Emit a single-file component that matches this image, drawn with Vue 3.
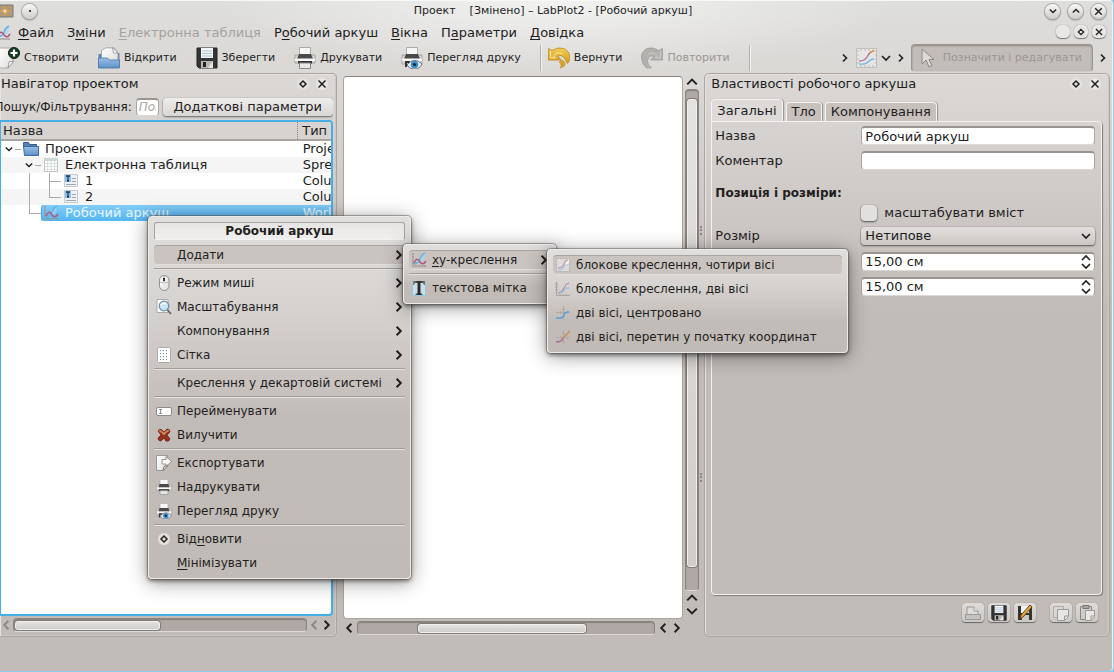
<script setup>
import { ref } from 'vue'

const menus = [
  { pre: '', key: 'Ф', post: 'айл' },
  { pre: 'З', key: 'м', post: 'іни' },
  { pre: '', key: 'Е', post: 'лектронна таблиця', disabled: true },
  { pre: 'Р', key: 'о', post: 'бочий аркуш' },
  { pre: '', key: 'В', post: 'ікна' },
  { pre: 'П', key: 'а', post: 'раметри' },
  { pre: '', key: 'Д', post: 'овідка' }
]

const tools = [
  { icon: 'new', label: 'Створити' },
  { icon: 'open', label: 'Відкрити' },
  { icon: 'save', label: 'Зберегти' },
  { icon: 'print', label: 'Друкувати' },
  { icon: 'preview', label: 'Перегляд друку' }
]

const rows = [
  { depth: 0, icon: 'folder', name: 'Проект', type: 'Project', open: true },
  { depth: 1, icon: 'sheet', name: 'Електронна таблиця', type: 'Spreadsheet', open: true },
  { depth: 2, icon: 'column', name: '1', type: 'Column' },
  { depth: 2, icon: 'column', name: '2', type: 'Column', last: true },
  { depth: 1, icon: 'worksheet', name: 'Робочий аркуш', type: 'Worksheet', selected: true, last: true }
]

const contextMenu = [
  { label: 'Додати', arrow: true, active: true },
  { sep: true },
  { icon: 'mouse', label: 'Режим миші', arrow: true },
  { icon: 'zoom', label: 'Масштабування', arrow: true },
  { label: 'Компонування', arrow: true },
  { icon: 'grid', label: 'Сітка', arrow: true },
  { sep: true },
  { label: 'Креслення у декартовій системі', arrow: true },
  { sep: true },
  { icon: 'rename', label: 'Перейменувати' },
  { icon: 'delete', label: 'Вилучити' },
  { sep: true },
  { icon: 'export', label: 'Експортувати' },
  { icon: 'print', label: 'Надрукувати' },
  { icon: 'preview', label: 'Перегляд друку' },
  { sep: true },
  { icon: 'diamond', pre: 'Від', key: 'н', label: 'овити' },
  { key: 'М', label: 'інімізувати' }
]

const addMenu = [
  { icon: 'worksheet', key: 'x', label: 'y-креслення', arrow: true, active: true },
  { sep: true },
  { icon: 'text', label: 'текстова мітка' }
]

const plotMenu = [
  { icon: 'plot4', label: 'блокове креслення, чотири вісі', active: true },
  { icon: 'plot2', label: 'блокове креслення, дві вісі' },
  { icon: 'axisc', label: 'дві вісі, центровано' },
  { icon: 'axiso', label: 'дві вісі, перетин у початку координат' }
]

const popups = [
  { id: 'ctx', title: 'Робочий аркуш', items: contextMenu },
  { id: 'add', items: addMenu },
  { id: 'plot', items: plotMenu }
]

const title = ref('Робочий аркуш')
const comment = ref('')
const filter = ref('')
const scale = ref(false)
const size = ref('Нетипове')
const sizes = ref([
  { label: 'Ширина', value: '15,00 см' },
  { label: 'Висота', value: '15,00 см' }
])
const tab = ref('Загальні')
const tabs = ['Загальні', 'Тло', 'Компонування']
</script>

<template>
  <svg class="defs" aria-hidden="true">
    <defs>
      <linearGradient id="gBlue" x1="0" y1="0" x2="0" y2="1"><stop offset="0" stop-color="#9bbfe6" /><stop offset="1" stop-color="#5f90c8" /></linearGradient>
      <linearGradient id="gPaper" x1="0" y1="0" x2="1" y2="1"><stop offset="0" stop-color="#ffffff" /><stop offset="1" stop-color="#dddddd" /></linearGradient>
      <linearGradient id="gUndo" x1="0" y1="0" x2="0" y2="1"><stop offset="0" stop-color="#f0cf5a" /><stop offset="1" stop-color="#d79a1c" /></linearGradient>
      <linearGradient id="gText" x1="0" y1="0" x2="1" y2="0"><stop offset="0" stop-color="#888" /><stop offset=".5" stop-color="#222" /><stop offset="1" stop-color="#777" /></linearGradient>

      <symbol id="i-new" viewBox="0 0 22 22">
        <path d="M1 1h14v14l-5 6H1z" fill="url(#gPaper)" stroke="#aaa" />
        <path d="M10 21l1-6 5-1z" fill="#fff" stroke="#999" />
        <circle cx="16" cy="6" r="5.500" fill="#173c20" stroke="#0c2010" />
        <path d="M16 2.500v7M12.500 6h7" stroke="#fff" stroke-width="2.200" />
      </symbol>
      <symbol id="i-open" viewBox="0 0 22 22">
        <path d="M.5 7h3V3h4l2 3h12v14H.5z" fill="#5c86b8" />
        <path d="M3.500 15V3.500L8 .8h8l4 5.200v9z" fill="url(#gPaper)" stroke="#999" stroke-width=".8" />
        <path d="M14.500 1l1 5h4.500z" fill="#fff" stroke="#888" stroke-width=".7" />
        <path d="M.5 11h9l2 2h10v8H.5z" fill="url(#gBlue)" stroke="#4472a6" stroke-width=".8" />
      </symbol>
      <symbol id="i-save" viewBox="0 0 22 22">
        <path d="M1 1h20v20H3l-2-2z" fill="#343434" stroke="#222" />
        <path d="M5 1h12v10H5z" fill="#f3f6f8" />
        <path d="M6 4h10M6 6.500h10M6 9h10" stroke="#a7c4d4" />
        <path d="M5 14h12v7H5z" fill="#b9b9b4" />
        <path d="M7 15h3v5H7z" fill="#222" />
        <path d="M12 21l5-7v7z" fill="#e6e6e0" />
      </symbol>
      <symbol id="i-print" viewBox="0 0 22 22">
        <path d="M1 8h20v8H1z" fill="#d5d5d5" stroke="#999" stroke-width=".8" />
        <path d="M5.500.5h11v9h-11z" fill="#f7f7f7" stroke="#aaa" />
        <path d="M5 7h12l2 5H3z" fill="#4a4a4a" />
        <path d="M1 11.500h20v2.500H1z" fill="#f8f8f8" />
        <path d="M4 14h14v2.500H4z" fill="#333" />
        <path d="M5.500 16h11v5.500h-11z" fill="#e8e8e8" stroke="#888" />
      </symbol>
      <symbol id="i-preview" viewBox="0 0 22 22">
        <path d="M1 8h20v9H1z" fill="#d5d5d5" stroke="#999" stroke-width=".8" />
        <path d="M5.500.5h11v9h-11z" fill="#f7f7f7" stroke="#aaa" />
        <path d="M5 7h12l2 5H3z" fill="#4a4a4a" />
        <path d="M1 11.500h20v2.500H1z" fill="#f8f8f8" />
        <path d="M4 14h5v2H6v4H4z" fill="#333" />
        <path d="M6 18q7-9 15-1-2 5-8 5-5 0-7-4z" fill="#e9f1f7" stroke="#667" stroke-width=".9" />
        <circle cx="13.500" cy="17.500" r="3.800" fill="#3f8dc6" />
        <circle cx="13.500" cy="17.500" r="1.600" fill="#12283c" />
      </symbol>
      <symbol id="i-undo" viewBox="0 0 22 22">
        <path d="M.5 1.500L4 3.500Q10-.5 16 1.500q6 3 6 9.500-.5 3-2.500 5.500L18 14q-1-4-5-5.500-2.500-.5-3 .5l3 4H.5z" fill="url(#gUndo)" stroke="#bd8a1b" stroke-width=".8" />
        <path d="M11 15l3-2q4 2 3 5-1 2-5 3 1.500-2 1-4z" fill="#dca52b" stroke="#bd8a1b" stroke-width=".6" />
        <path d="M2.500 4v7h5l-2-2q4-5 9-2" fill="none" stroke="#f9e9a4" />
      </symbol>
      <symbol id="i-redo" viewBox="0 0 22 22">
        <path d="M21.500 1.500L18 3.500Q12-.5 6 1.500 0 4.500.5 11q.5 6 5 10 3-.5 5 0-4-3-4-7 .5-4.500 4-5 1.500 0 2 1l-3 3h12z" fill="#b3b1ae" stroke="#9e9c99" stroke-width=".8" />
        <path d="M19.500 4v7h-5l2-2q-4-5-9-2" fill="none" stroke="#cfcdca" />
      </symbol>
      <symbol id="i-folder" viewBox="0 0 16 16">
        <path d="M.5 3.500V1.500h5l1 2h7v3H.5z" fill="#5380b8" stroke="#365d90" />
        <path d="M.5 5.500h15v9h-14z" fill="url(#gBlue)" stroke="#3e6ba0" />
      </symbol>
      <symbol id="i-sheet" viewBox="0 0 16 16">
        <path d="M1.500 1.500h13v13h-13z" fill="#fcfcfc" stroke="#c4c4c4" />
        <path d="M1 1h14v3H1z" fill="#c9d8d3" />
        <path d="M2 6.500h12M2 9.500h12M2 12.500h12M4.500 4v10M8 4v10M11.500 4v10" stroke="#d5d9da" stroke-width=".8" />
      </symbol>
      <symbol id="i-column" viewBox="0 0 16 16">
        <path d="M1.500 1.500h13v12h-13z" fill="#eef1f4" stroke="#c4cacf" />
        <path d="M2 2h6v7H2z" fill="#8fc0e6" />
        <path d="M3 3h4M5 3v5M4 8h2" stroke="#123a66" stroke-width="1.300" />
        <path d="M9 5.500h4M9 8.500h4M3 11.500h10" stroke="#9ba8b3" />
      </symbol>
      <symbol id="i-worksheet" viewBox="0 0 16 16">
        <path d="M2 1v13M1 14h14M1 2h2M1 5h2M1 8h2M1 11h2M5 13v2M8 13v2M11 13v2M14 13v2" stroke="#9b938f" stroke-width=".8" />
        <path d="M8 10q0-6 6-9l-1 8z" fill="#a9d6f2" opacity=".6" />
        <path d="M3 12q5-1 6-5t5-6" fill="none" stroke="#62b5e7" stroke-width="1.400" />
        <path d="M3 11q3-7 6-1 3 4 6-1" fill="none" stroke="#b2567a" stroke-width="1.500" />
      </symbol>
      <symbol id="i-plot4" viewBox="0 0 16 16">
        <path d="M1.500 1.500h13v13h-13z" fill="#dedbd9" stroke="#b5b0ad" stroke-dasharray="2 1" />
        <path d="M3 11q5 0 6-4t4-4" fill="none" stroke="#c59abb" stroke-width="1.200" />
        <path d="M3 13q5 0 6-3t4-2" fill="none" stroke="#a5cce4" stroke-width="1.200" />
        <path d="M10 8l4-6v4z" fill="#f4f3f2" />
      </symbol>
      <symbol id="i-plot2" viewBox="0 0 16 16">
        <path d="M1.500 1v13.500H15M0 3h3M0 6h3M0 9h3M5 13v2M8 13v2M11 13v2" fill="none" stroke="#aaa5a2" />
        <path d="M3 12q4 0 6-5t5-5" fill="none" stroke="#b27a9d" />
        <path d="M4 12q4 0 5-3t5-2" fill="none" stroke="#70bee9" />
      </symbol>
      <symbol id="i-axisc" viewBox="0 0 16 16">
        <path d="M8.500 1v14M1 7.500h14M7 4.500h3M7 11.500h3M5.500 6v3M12.500 6v3" stroke="#b0aba8" />
        <path d="M1 13q7 1 8-3t5-3" fill="none" stroke="#4c9fdd" stroke-width="1.300" />
      </symbol>
      <symbol id="i-axiso" viewBox="0 0 16 16">
        <path d="M8.500 1v14M1 8.500h14M7 4.500h3M7 12.500h3M5.500 7v3M12.500 7v3" stroke="#b0aba8" />
        <path d="M1 13q6 0 7-4" fill="none" stroke="#b36797" stroke-width="1.300" />
        <path d="M8 9l7-7" stroke="#d08746" stroke-width="1.300" />
      </symbol>
      <symbol id="i-mouse" viewBox="0 0 16 16">
        <rect x="3.500" y=".5" width="9.500" height="15" rx="4.800" fill="url(#gPaper)" stroke="#8d8d8d" />
        <path d="M8 1v6" stroke="#999" /><path d="M8 3v3" stroke="#333" stroke-width="2" />
        <path d="M4 7q4 2 8.500 0" fill="none" stroke="#aaa" stroke-width=".8" />
      </symbol>
      <symbol id="i-zoom" viewBox="0 0 16 16">
        <path d="M1 .5h11v13H1z" fill="#fff" stroke="#aaa" />
        <circle cx="8" cy="7" r="4.800" fill="#c9e3f0" stroke="#6a8fa4" stroke-width="1.200" />
        <path d="M11.500 11l3.500 4" stroke="#666" stroke-width="1.800" />
        <path d="M5 6q2-3 5-1" fill="none" stroke="#fff" stroke-width="1.300" />
      </symbol>
      <symbol id="i-grid" viewBox="0 0 16 16">
        <rect x="1.500" y=".5" width="13" height="15" rx="1" fill="#fff" stroke="#aaa" />
        <path d="M4 3.500h9M4 6.500h9M4 9.500h9M4 12.500h9" stroke="#5b7fb0" stroke-dasharray="1 2" />
      </symbol>
      <symbol id="i-rename" viewBox="0 0 16 16">
        <rect x=".5" y="4.500" width="15" height="8" rx="1.500" fill="#fff" stroke="#8f8b88" />
        <path d="M3 6.500h3M4.500 6.500v4M3 10.500h3" stroke="#777" stroke-width=".8" />
      </symbol>
      <symbol id="i-delete" viewBox="0 0 16 16">
        <path d="M2 4q1-3 4-1l2 2 3-3q3 0 3 3l-3 3 3 4q-1 3-4 2l-2-3-3 3q-3 0-3-3l3-3z" fill="#94301f" stroke="#712015" stroke-width=".8" />
        <path d="M3 4q1-1 5 3 3-4 5-3" fill="none" stroke="#d08a58" stroke-width="1.800" />
      </symbol>
      <symbol id="i-export" viewBox="0 0 16 16">
        <path d="M.5.5h11v11l-4 4h-7z" fill="url(#gPaper)" stroke="#999" />
        <path d="M6 4.500h4V1.500l5.500 5-5.500 5V9H6z" fill="#f8f8f8" stroke="#888" stroke-width=".9" />
        <path d="M7 15.500l1-4 4-1z" fill="#fff" stroke="#777" />
      </symbol>
      <symbol id="i-diamond" viewBox="0 0 16 16">
        <circle cx="8" cy="8" r="6" fill="#e4e1df" />
        <path d="M8 5l3 3-3 3-3-3z" fill="none" stroke="#222" stroke-width="1.500" />
      </symbol>
      <symbol id="i-close" viewBox="0 0 16 16">
        <circle cx="8" cy="8" r="6" fill="#e8e6e4" />
        <path d="M4.500 4.500l7 7M11.500 4.500l-7 7" stroke="#222" stroke-width="1.500" />
      </symbol>
      <symbol id="i-text" viewBox="0 0 16 16">
        <path d="M1.500 1v14.500h13V1" fill="#cfdde6" stroke="#8fc8ea" />
        <path d="M2 1h12v4h-1l-1-2H9.500v10l2 1v1h-7v-1l2-1V3H4L3 5H2z" fill="url(#gText)" />
      </symbol>
      <symbol id="i-plot" viewBox="0 0 22 22">
        <rect x="1.500" y="1.500" width="20" height="19" fill="#e6e5e3" stroke="#c2bfbc" />
        <path d="M2 4h2M2 8h2M2 12h2M2 16h2M20 4h2M20 8h2M20 12h2M20 16h2M6 2v2M10 2v2M14 2v2M6 18v2M10 18v2M14 18v2M18 18v2" stroke="#bbb" />
        <path d="M4 14q6 0 8-4 3-6 7-6" fill="none" stroke="#b0709c" stroke-width="1.300" />
        <path d="M4 17q7 1 10-3 2-2 5-2" fill="none" stroke="#72b9e6" stroke-width="1.300" />
        <path d="M15 6l4-3" stroke="#e39b45" stroke-width="1.300" />
      </symbol>
      <symbol id="i-pointer" viewBox="0 0 22 22">
        <path d="M6 2v15l4-4 3 7 3-1.500-3-6h5z" fill="#dcd8d5" stroke="#8e8986" />
      </symbol>
      <symbol id="i-right" viewBox="0 0 10 10"><path d="M3 1.500L6.500 5 3 8.500" fill="none" stroke="currentColor" stroke-width="1.600" /></symbol>
      <symbol id="i-left" viewBox="0 0 10 10"><path d="M7 1.500L3.500 5 7 8.500" fill="none" stroke="currentColor" stroke-width="1.600" /></symbol>
      <symbol id="i-down" viewBox="0 0 10 10"><path d="M1 3l4 4 4-4" fill="none" stroke="currentColor" stroke-width="1.700" /></symbol>
      <symbol id="i-up" viewBox="0 0 10 10"><path d="M1 7l4-4 4 4" fill="none" stroke="currentColor" stroke-width="1.700" /></symbol>
      <symbol id="i-gload" viewBox="0 0 16 16">
        <path d="M2 13V2h7l4 4v7z" fill="#ddd" stroke="#999" /><path d="M9 2v4h4" fill="#eee" stroke="#999" />
        <path d="M.5 9.500h15v5H.5z" fill="#c4c2c0" stroke="#999" />
      </symbol>
      <symbol id="i-saveas" viewBox="0 0 16 16">
        <path d="M1 1h14v14H1z" fill="#343434" /><path d="M4 1h8v7H4z" fill="#eef4f8" /><path d="M5 10h7v5H5z" fill="#c9c9c4" />
        <path d="M3 14l1-4L13 0l2 2-9 10z" fill="#e9a93a" stroke="#5a3510" stroke-width=".9" />
      </symbol>
      <symbol id="i-copy" viewBox="0 0 16 16">
        <path d="M.5 1.500h10v11H.5z" fill="#d9d7d5" stroke="#aaa" />
        <path d="M4.500 4.500h11v7l-4 4h-7z" fill="#e6e5e3" stroke="#999" /><path d="M11.500 15v-4h4" fill="none" stroke="#999" />
      </symbol>
      <symbol id="i-paste" viewBox="0 0 16 16">
        <path d="M1.500 1.500h11v13h-11z" fill="#cfcdcb" stroke="#888" /><path d="M4 .5h6v3H4z" fill="#aaa" stroke="#777" />
        <path d="M6.500 5.500h9v6l-3 4h-6z" fill="#e8e7e5" stroke="#999" /><path d="M12 15v-4h3" fill="none" stroke="#999" />
      </symbol>
      <symbol id="i-app" viewBox="0 0 16 16">
        <path d="M-1 2h16v12H-1z" fill="#9f998e" stroke="#7e7970" /><path d="M0 4h13v8H0z" fill="none" stroke="#c79c5c" />
        <path d="M7 3l2 3 4 2-4 2-2 3-2-3-4-2 4-2z" fill="#d9a050" /><circle cx="7" cy="8" r="1.500" fill="#efe3cc" />
      </symbol>
    </defs>
  </svg>

  <div class="window">
    <header class="titlebar">
      <svg class="s16"><use href="#i-app" /></svg>
      <button class="round" aria-label="Закріпити"><span class="dot"></span></button>
      <h1>Проект &nbsp;&nbsp; [Змінено] – LabPlot2 - [Робочий аркуш]</h1>
      <button class="round" aria-label="Згорнути"><svg class="s8"><use href="#i-down" /></svg></button>
      <button class="round" aria-label="Розгорнути"><svg class="s8"><use href="#i-up" /></svg></button>
      <button class="round" aria-label="Закрити"><svg class="s15"><use href="#i-close" /></svg></button>
    </header>

    <nav class="menubar">
      <svg class="s16 menuicon"><use href="#i-worksheet" /></svg>
      <button v-for="m in menus" :key="m.post" :disabled="m.disabled">{{ m.pre }}<u>{{ m.key }}</u>{{ m.post }}</button>
      <span class="grow"></span>
      <div class="pills">
        <button aria-label="Згорнути аркуш"></button>
        <button aria-label="Відновити аркуш"><svg class="s14"><use href="#i-diamond" /></svg></button>
        <button aria-label="Закрити аркуш"><svg class="s14"><use href="#i-close" /></svg></button>
      </div>
    </nav>

    <div class="toolbar">
      <button v-for="t in tools" :key="t.icon" class="tool"><svg class="s22"><use :href="'#i-' + t.icon" /></svg>{{ t.label }}</button>
      <span class="vsep"></span>
      <button class="tool undo"><svg class="s22"><use href="#i-undo" /></svg>Вернути</button>
      <button class="tool" disabled><svg class="s22"><use href="#i-redo" /></svg>Повторити</button>
      <span class="vsep"></span>
      <span class="grow"></span>
      <div class="extras">
        <button aria-label="Більше"><svg class="s10"><use href="#i-right" /></svg></button>
        <button class="plotbtn" aria-label="Креслення"><svg class="s22"><use href="#i-plot" /></svg><svg class="s10"><use href="#i-down" /></svg></button>
        <button aria-label="Більше"><svg class="s10"><use href="#i-right" /></svg></button>
        <button class="mode" disabled><svg class="s22"><use href="#i-pointer" /></svg>Позначити і редагувати</button>
        <button aria-label="Більше"><svg class="s10"><use href="#i-right" /></svg></button>
      </div>
    </div>

    <main class="main">
      <section class="dock explorer">
        <div class="docktitle">
          <h2>Навігатор проектом</h2>
          <button aria-label="Від’єднати"><svg class="s16"><use href="#i-diamond" /></svg></button>
          <button aria-label="Закрити"><svg class="s16"><use href="#i-close" /></svg></button>
        </div>
        <div class="search">
          <label for="filter">Пошук/Фільтрування:</label>
          <input id="filter" v-model="filter" placeholder="Пошук" />
          <button class="push">Додаткові параметри</button>
        </div>
        <div class="tree">
          <table>
            <thead>
              <tr><th class="c1">Назва</th><th>Тип</th></tr>
            </thead>
            <tbody>
              <tr v-for="r in rows" :key="r.name">
                <td>
                  <div class="node">
                    <span v-for="n in r.depth + 1" :key="n" class="branch" :class="{ elbow: n === r.depth + 1 && r.depth && !r.open, end: r.last && n === r.depth + 1, pass: n === 2 && r.depth === 2, top: n === r.depth + 1 && r.open }">
                      <svg v-if="r.open && n === r.depth + 1" class="s8"><use href="#i-down" /></svg>
                    </span>
                    <span class="cell" :class="{ sel: r.selected }"><svg class="s16"><use :href="'#i-' + r.icon" /></svg>{{ r.name }}</span>
                  </div>
                </td>
                <td :class="{ sel: r.selected }">{{ r.type }}</td>
              </tr>
            </tbody>
          </table>
        </div>
        <div class="scroll">
          <svg class="s12 off"><use href="#i-left" /></svg>
          <div class="track"><div class="thumb t1"></div></div>
          <svg class="s12 off"><use href="#i-left" /></svg>
          <svg class="s12"><use href="#i-right" /></svg>
        </div>
      </section>

      <section class="center">
        <div class="canvas"></div>
        <div class="scroll vert">
          <svg class="s12"><use href="#i-up" /></svg>
          <div class="track"><div class="thumb t3"></div></div>
          <svg class="s12"><use href="#i-up" /></svg>
          <svg class="s12"><use href="#i-down" /></svg>
        </div>
        <div class="scroll">
          <svg class="s12"><use href="#i-left" /></svg>
          <div class="track"><div class="thumb t2"></div></div>
          <svg class="s12"><use href="#i-left" /></svg>
          <svg class="s12"><use href="#i-right" /></svg>
        </div>
      </section>

      <section class="dock props">
        <div class="docktitle">
          <h2>Властивості робочого аркуша</h2>
          <button aria-label="Від’єднати"><svg class="s16"><use href="#i-diamond" /></svg></button>
          <button aria-label="Закрити"><svg class="s16"><use href="#i-close" /></svg></button>
        </div>
        <div class="tabs" role="tablist">
          <button v-for="t in tabs" :key="t" role="tab" :aria-selected="t === tab" :class="{ on: t === tab }" @click="tab = t">{{ t }}</button>
        </div>
        <form class="pane" @submit.prevent>
          <label for="name">Назва</label>
          <input id="name" v-model="title" />
          <label for="comment">Коментар</label>
          <input id="comment" v-model="comment" />
          <h3>Позиція і розміри:</h3>
          <div class="check"><input id="scale" v-model="scale" type="checkbox" /><label for="scale">масштабувати вміст</label></div>
          <label for="size">Розмір</label>
          <div class="combo"><select id="size" v-model="size"><option>Нетипове</option></select><svg class="s10"><use href="#i-down" /></svg></div>
          <div v-for="s in sizes" :key="s.label" class="spin"><input v-model="s.value" :aria-label="s.label" /><svg viewBox="0 0 10 16"><path d="M1 6l4-4 4 4M1 10l4 4 4-4" fill="none" stroke="#222" stroke-width="1.700" /></svg></div>
        </form>
        <div class="actions">
          <button aria-label="Завантажити"><svg class="s16"><use href="#i-gload" /></svg></button>
          <button aria-label="Зберегти"><svg class="s16"><use href="#i-save" /></svg></button>
          <button aria-label="Зберегти типовим"><svg class="s16"><use href="#i-saveas" /></svg></button>
          <button class="second" aria-label="Копіювати"><svg class="s16"><use href="#i-copy" /></svg></button>
          <button aria-label="Вставити"><svg class="s16"><use href="#i-paste" /></svg></button>
        </div>
        <span class="grip"></span>
        <span class="grip low"></span>
      </section>
    </main>

    <footer class="status"></footer>

    <div v-for="p in popups" :key="p.id" class="popup" :class="p.id" role="menu">
      <div v-if="p.title" class="ptitle">{{ p.title }}</div>
      <template v-for="(i, k) in p.items" :key="k">
        <hr v-if="i.sep" />
        <button v-else class="item" :class="{ active: i.active }" role="menuitem">
          <svg class="s16"><use v-if="i.icon" :href="'#i-' + i.icon" /></svg>
          <span>{{ i.pre }}<u v-if="i.key">{{ i.key }}</u>{{ i.label }}</span>
          <svg v-if="i.arrow" class="s12 arrow"><use href="#i-right" /></svg>
        </button>
      </template>
    </div>
  </div>
</template>

<style>
body { margin: 0; background: #8ecdf0; }
</style>

<style scoped>
* { box-sizing: border-box; }
.defs { position: absolute; width: 0; height: 0; }
.window {
  position: relative;
  display: flex;
  flex-direction: column;
  min-height: calc(100vh - 1px);
  margin-right: 1px;
  overflow: hidden;
  color: #221e1e;
  font: 13px/16px "DejaVu Sans", sans-serif;
  border-top: 1px solid #f8f8f8;
  border-right: 1px solid #f3f3f3;
  border-radius: 0 4px 4px 0;
  background:
    radial-gradient(ellipse 340px 74px at 50% 0, rgba(255, 255, 255, .6), rgba(255, 255, 255, 0)),
    linear-gradient(#dededc, #dad7d4 80px, #d6d2cf 130px, #c2bcb8 310px, #c1bcb7);
}
button, input, select { font: inherit; color: inherit; padding: 0; margin: 0; border: 0; background: none; min-width: 0; }
button { white-space: nowrap; }
h1, h2, h3 { margin: 0; font: inherit; }
svg { flex: none; display: block; }
u { text-underline-offset: 2px; }
.s8 { width: 8px; height: 8px; }
.s10 { width: 10px; height: 10px; }
.s12 { width: 12px; height: 12px; }
.s14 { width: 14px; height: 14px; }
.s15 { width: 15px; height: 15px; }
.s16 { width: 16px; height: 16px; }
.s22 { width: 22px; height: 22px; }
.grow { flex: 1; }

.titlebar { display: flex; align-items: center; height: 20px; gap: 8px; padding-right: 6px; font-size: 11px; }
.titlebar .s16 { margin-left: -2px; }
.titlebar h1 { flex: 1; padding-left: 24px; text-align: center; white-space: pre; }
.round { width: 15px; height: 15px; border-radius: 50%; display: grid; place-items: center; background: linear-gradient(#f8f8f8, #cfcdcb); box-shadow: 0 0 0 1px #aaa7a4, 0 1px 2px #666; }
.dot { width: 2px; height: 2px; background: #444; }

.menubar { display: flex; align-items: center; height: 22px; padding: 2px 6px 0 0; gap: 13px; }
.menubar button:disabled { color: #a5a29f; }
.menuicon { margin: 0 -6px 0 -5px; }
.pills { display: flex; gap: 4px; padding-bottom: 3px; }
.pills button { width: 14px; height: 13px; border-radius: 5px; background: #e8e7e5; box-shadow: 0 1px 1px #777, 0 0 1px #777; display: grid; place-items: center; }

.toolbar { display: flex; align-items: center; height: 30px; gap: 19px; padding-right: 4px; font-size: 11px; }
.tool { display: flex; align-items: center; gap: 4px; height: 24px; }
.tool:first-child { margin-left: -2px; }
.tool:disabled, .mode:disabled { color: #999694; }
.tool.undo { margin-left: -13px; }
.vsep { width: 2px; height: 26px; background: linear-gradient(90deg, #b5b1ae 50%, #f2f1f0 50%); }
.extras { display: flex; align-items: center; gap: 5px; }
.plotbtn { display: flex; align-items: center; gap: 4px; }
.mode { display: flex; align-items: center; gap: 5px; height: 28px; padding: 0 10px 0 4px; background: #c3bdb9; border: 1px solid #9c9794; border-bottom-color: #cfcbc8; border-radius: 4px; box-shadow: inset 0 1px 2px #8a8582; }

.main { flex: 1; display: grid; grid-template-columns: 337fr 356fr 406fr; gap: 6px; padding-right: 2px; min-height: 0; }
.dock { position: relative; min-width: 0; display: flex; flex-direction: column; border: 1px solid #aaa5a1; border-radius: 5px; box-shadow: inset 1px 1px #e6e3e1, inset -1px -1px #cdc8c4; }
.explorer { border-left: 0; border-radius: 0 5px 5px 0; padding: 0 3px 2px 0; }
.docktitle { display: flex; align-items: center; height: 20px; gap: 3px; padding: 0 3px 0 0; }
.docktitle h2 { flex: 1; padding-left: 1px; white-space: nowrap; }
.search { display: flex; align-items: center; justify-content: flex-end; height: 25px; gap: 4px; overflow: hidden; }
.search label { white-space: nowrap; flex: none; font-size: 12px; }
.search input { flex: none; width: 23px; height: 18px; padding: 0 2px; font-size: 12px; }
.search input::placeholder { color: #a9a9a9; font-style: italic; }
input:not([type=checkbox]) { background: #fff; border: 1px solid #aaa5a2; border-top: 2px solid #999491; border-bottom-color: #ddd9d6; border-radius: 4px; }
.push { flex: none; width: 170px; height: 18px; border-radius: 4px; background: linear-gradient(#efeeed, #d9d6d4); box-shadow: 0 1px 2px #666, 0 0 1px #888; }
.tree { flex: 1; margin-top: 1px; overflow: hidden; background: #fff; border: 2px solid #48aee6; border-left-width: 1px; border-radius: 0 4px 4px 0; box-shadow: inset 0 0 1px #8fd0f2; }
table { width: 100%; table-layout: fixed; border-collapse: collapse; }
th { height: 18px; padding: 0 0 0 2px; text-align: left; font-weight: 400; background: #d7d3d0; border-bottom: 2px solid #aaa5a1; }
th + th { border-left: 1px dotted #8a8683; padding-left: 4px; }
.c1 { width: 90%; }
td { height: 16px; padding: 0; overflow: hidden; white-space: nowrap; }
td + td { padding-left: 5px; }
tbody tr:nth-child(even) { background: #f5f5f5; }
.node { display: flex; height: 16px; }
.branch { position: relative; width: 20px; flex: none; display: flex; align-items: center; padding-left: 4px; }
.branch.top::after { content: ""; width: 6px; height: 1px; margin-left: 2px; background: #aaa; }
.branch.elbow::before, .branch.pass::before { content: ""; position: absolute; left: 8px; top: 0; bottom: 0; border-left: 1px solid #aaa; }
.branch.end::before { bottom: 7px; }
.branch.elbow::after { content: ""; width: 11px; height: 1px; margin-left: 5px; background: #aaa; }
.cell { flex: 1; display: flex; gap: 6px; padding-left: 2px; line-height: 16px; }
.sel { color: #e7f6ff; background: linear-gradient(#82ccf8, #55b6f2); }
.cell.sel { border-radius: 3px 0 0 3px; box-shadow: inset 1px 0 #3daee9; }

.scroll { display: flex; align-items: center; gap: 1px; height: 18px; color: #222; }
.off { color: #8d8885; }
.track { flex: 1; display: flex; height: 14px; padding: 2px 1px 1px; border: 1px solid #8b8582; border-bottom-color: #ddd9d6; border-radius: 4px; background: #b0a8a4; box-shadow: inset 0 1px 1px #857f7b; }
.thumb { background: linear-gradient(#e4e3e1, #cfccc9); border: 1px solid #f1f0ef; border-radius: 3px; box-shadow: 0 0 0 1px #827c78; }
.t1 { width: 50%; }
.t2 { width: 57%; margin-left: 20%; }
.t3 { height: 94%; margin-top: 8px; width: 100%; }
.center { display: grid; grid-template-columns: minmax(0, 1fr) 15px; grid-template-rows: minmax(0, 1fr) 17px; min-width: 0; padding: 3px 0 1px; }
.center .scroll { gap: 2px; }
.canvas { background: #fff; border: 1px solid #aaa5a2; border-top-color: #8b8683; border-radius: 4px; }
.center .vert { flex-direction: column; height: auto; width: 15px; margin-left: 1px; gap: 1px; padding-bottom: 2px; }
.vert .track { width: 14px; padding: 1px; flex-direction: column; }

.props { padding: 0 7px 9px 6px; }
.props .docktitle { margin: 0 -4px 5px 0; }
.props h2 { padding-left: 0; }
.tabs { display: flex; align-items: flex-end; gap: 3px; height: 22px; }
.tabs button { height: 19px; padding: 0 5px; border: 1px solid #f5f4f3; border-bottom: 0; border-radius: 4px 4px 0 0; background: #c7c1be; box-shadow: 1px 0 1px #96918e; }
.tabs .on { height: 22px; background: #dddad8; }
.pane { flex: 1; display: grid; grid-template-columns: 146px minmax(0, 1fr); grid-template-rows: 25px 25px 28px 23px 24px 26px 24px; align-items: center; align-content: start; padding: 1px 6px 0 3px; border: 1px solid #f3f2f1; border-radius: 0 4px 4px 4px; box-shadow: 1px 1px 1px #817c78; }
.pane > * { min-width: 0; }
.pane input:not([type=checkbox]) { width: 100%; height: 19px; padding: 0 3px; display: block; }
.pane h3 { grid-column: 1 / 3; font-size: 12px; font-weight: 700; padding-top: 12px; }
.check { grid-column: 2; display: flex; align-items: center; gap: 7px; }
.check input { appearance: none; width: 16px; height: 16px; border-radius: 4px; background: #e2e0de; box-shadow: 0 1px 2px #555, 0 0 1px #777; }
.combo, .spin { position: relative; grid-column: 2; }
.combo select { appearance: none; display: block; width: 100%; height: 18px; padding: 0 4px; border-radius: 4px; background: linear-gradient(#e2e0df, #cbc6c3); box-shadow: 0 1px 2px #555, 0 0 1px #555; }
.combo svg { position: absolute; right: 4px; top: 4px; }
.spin svg { position: absolute; right: 4px; top: 2px; width: 10px; height: 16px; }
.actions { display: flex; justify-content: flex-end; gap: 4px; padding: 8px 4px 5px 0; }
.actions button { width: 22px; height: 19px; display: grid; place-items: center; border-radius: 4px; background: linear-gradient(#dedbd9, #cdc8c5); box-shadow: 0 1px 1px #666, 0 0 1px #777; }
.actions .second { margin-left: 10px; }
.grip { position: absolute; left: -5px; top: 27%; height: 9px; border-left: 2px dotted #8b8683; }
.grip.low { top: 71%; }
.status { height: 34px; }

.popup { position: absolute; display: flex; flex-direction: column; padding: 3px 5px; font-size: 12px; border: 1px solid #edebea; border-radius: 4px; background: linear-gradient(#e0dfdd, #d6d2cf 35%, #c2bcb8 70%, #c0bbb6); box-shadow: 0 0 0 1px rgba(90, 80, 75, .45), 0 3px 20px rgba(0, 0, 0, .42), 0 2px 4px rgba(0, 0, 0, .5); }
.ctx { left: 148px; top: 215px; width: 263px; background: linear-gradient(#e0dfdd, #d6d2cf 90px, #c2bcb8 200px, #c0bbb6); }
.add { left: 403px; top: 243px; width: 153px; }
.plot { left: 547px; top: 248px; width: 301px; }
.ptitle { height: 18px; margin: 2px 0 3px; line-height: 17px; text-align: center; font-weight: 700; border: 1px solid #a7a3a0; border-bottom-color: #f3f3f3; border-radius: 3px; background: linear-gradient(#e6e5e4, #f0efee); }
.item { display: flex; align-items: center; gap: 5px; width: 100%; height: 20px; margin: 2px 0; padding-left: 2px; text-align: left; border-radius: 4px; }
.item span { flex: 1; }
.item .arrow { margin-left: -8px; }
.item.active { background: #cac4c1; box-shadow: inset 0 1px #aaa5a2, inset 0 -1px #e2dfdd; }
hr { width: 100%; height: 2px; margin: 1px 0; border: 0; background: linear-gradient(#a39d99 50%, #e4e1df 50%); }
</style>
